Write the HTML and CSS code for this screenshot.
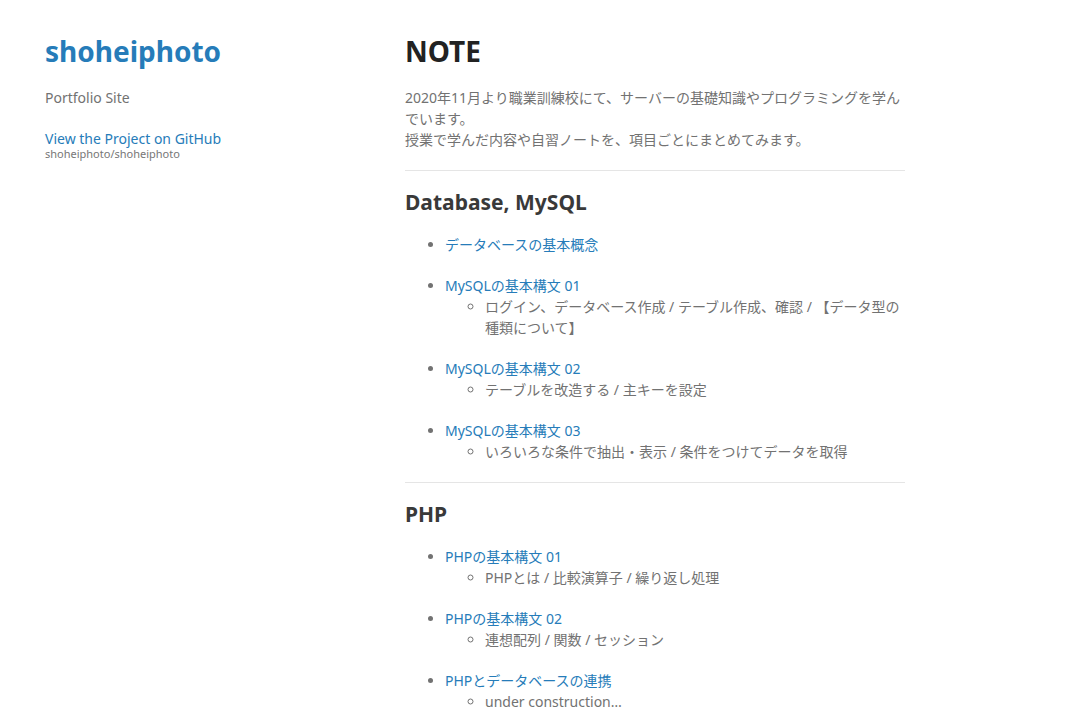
FILE: index.html
```html
<!DOCTYPE html>
<html lang="ja">
<head>
<meta charset="utf-8">
<title>shoheiphoto</title>
<link rel="stylesheet" href="styles.css">
</head>
<body>
<div class="wrapper">
  <header class="side">
    <h1 class="site-title"><a href="#">shoheiphoto</a></h1>
    <p>Portfolio Site</p>
    <p class="view"><a href="#">View the Project on GitHub <small>shoheiphoto/shoheiphoto</small></a></p>
  </header>
  <section class="main">
    <h1 class="page-title">NOTE</h1>
    <p>2020年11月より職業訓練校にて、サーバーの基礎知識やプログラミングを学んでいます。<br>授業で学んだ内容や自習ノートを、項目ごとにまとめてみます。</p>
    <hr>
    <h2>Database, MySQL</h2>
    <ul class="topics">
      <li><a href="#">データベースの基本概念</a></li>
      <li><a href="#">MySQLの基本構文 01</a>
        <ul class="sub"><li>ログイン、データベース作成 / テーブル作成、確認 / 【データ型の種類について】</li></ul>
      </li>
      <li><a href="#">MySQLの基本構文 02</a>
        <ul class="sub"><li>テーブルを改造する / 主キーを設定</li></ul>
      </li>
      <li><a href="#">MySQLの基本構文 03</a>
        <ul class="sub"><li>いろいろな条件で抽出・表示 / 条件をつけてデータを取得</li></ul>
      </li>
    </ul>
    <hr>
    <h2>PHP</h2>
    <ul class="topics">
      <li><a href="#">PHPの基本構文 01</a>
        <ul class="sub"><li>PHPとは / 比較演算子 / 繰り返し処理</li></ul>
      </li>
      <li><a href="#">PHPの基本構文 02</a>
        <ul class="sub"><li>連想配列 / 関数 / セッション</li></ul>
      </li>
      <li><a href="#">PHPとデータベースの連携</a>
        <ul class="sub"><li>under construction…</li></ul>
      </li>
    </ul>
  </section>
</div>
</body>
</html>
```
FILE: styles.css
```css
html, body {
  margin: 0;
  background: #fff;
}
body {
  padding: 36px 0 50px 45px;
  font: 14px/1.5 "Noto Sans", "Noto Sans CJK JP", sans-serif;
  color: #727272;
}
a {
  color: #267CB9;
  text-decoration: none;
}
.wrapper {
  width: 860px;
  display: flex;
  justify-content: space-between;
  align-items: flex-start;
}
.side {
  width: 270px;
}
.main {
  width: 500px;
}
h1, h2 {
  margin: 0 0 20px;
  line-height: 1.1;
}
h1 {
  font-size: 28px;
  color: #222;
}
h2 {
  font-size: 21px;
  color: #393939;
}
p, ul {
  margin: 0 0 20px;
}
.view small {
  display: block;
  font-size: 11px;
  color: #777;
  margin-top: -0.3em;
}
hr {
  border: 0;
  background: #e5e5e5;
  height: 1px;
  margin: 0 0 20px;
}
.topics {
  padding-left: 40px;
  list-style: disc;
}
.topics > li {
  margin-bottom: 20px;
}
.topics .sub {
  margin: 0;
  padding-left: 40px;
  list-style: circle;
}
```
